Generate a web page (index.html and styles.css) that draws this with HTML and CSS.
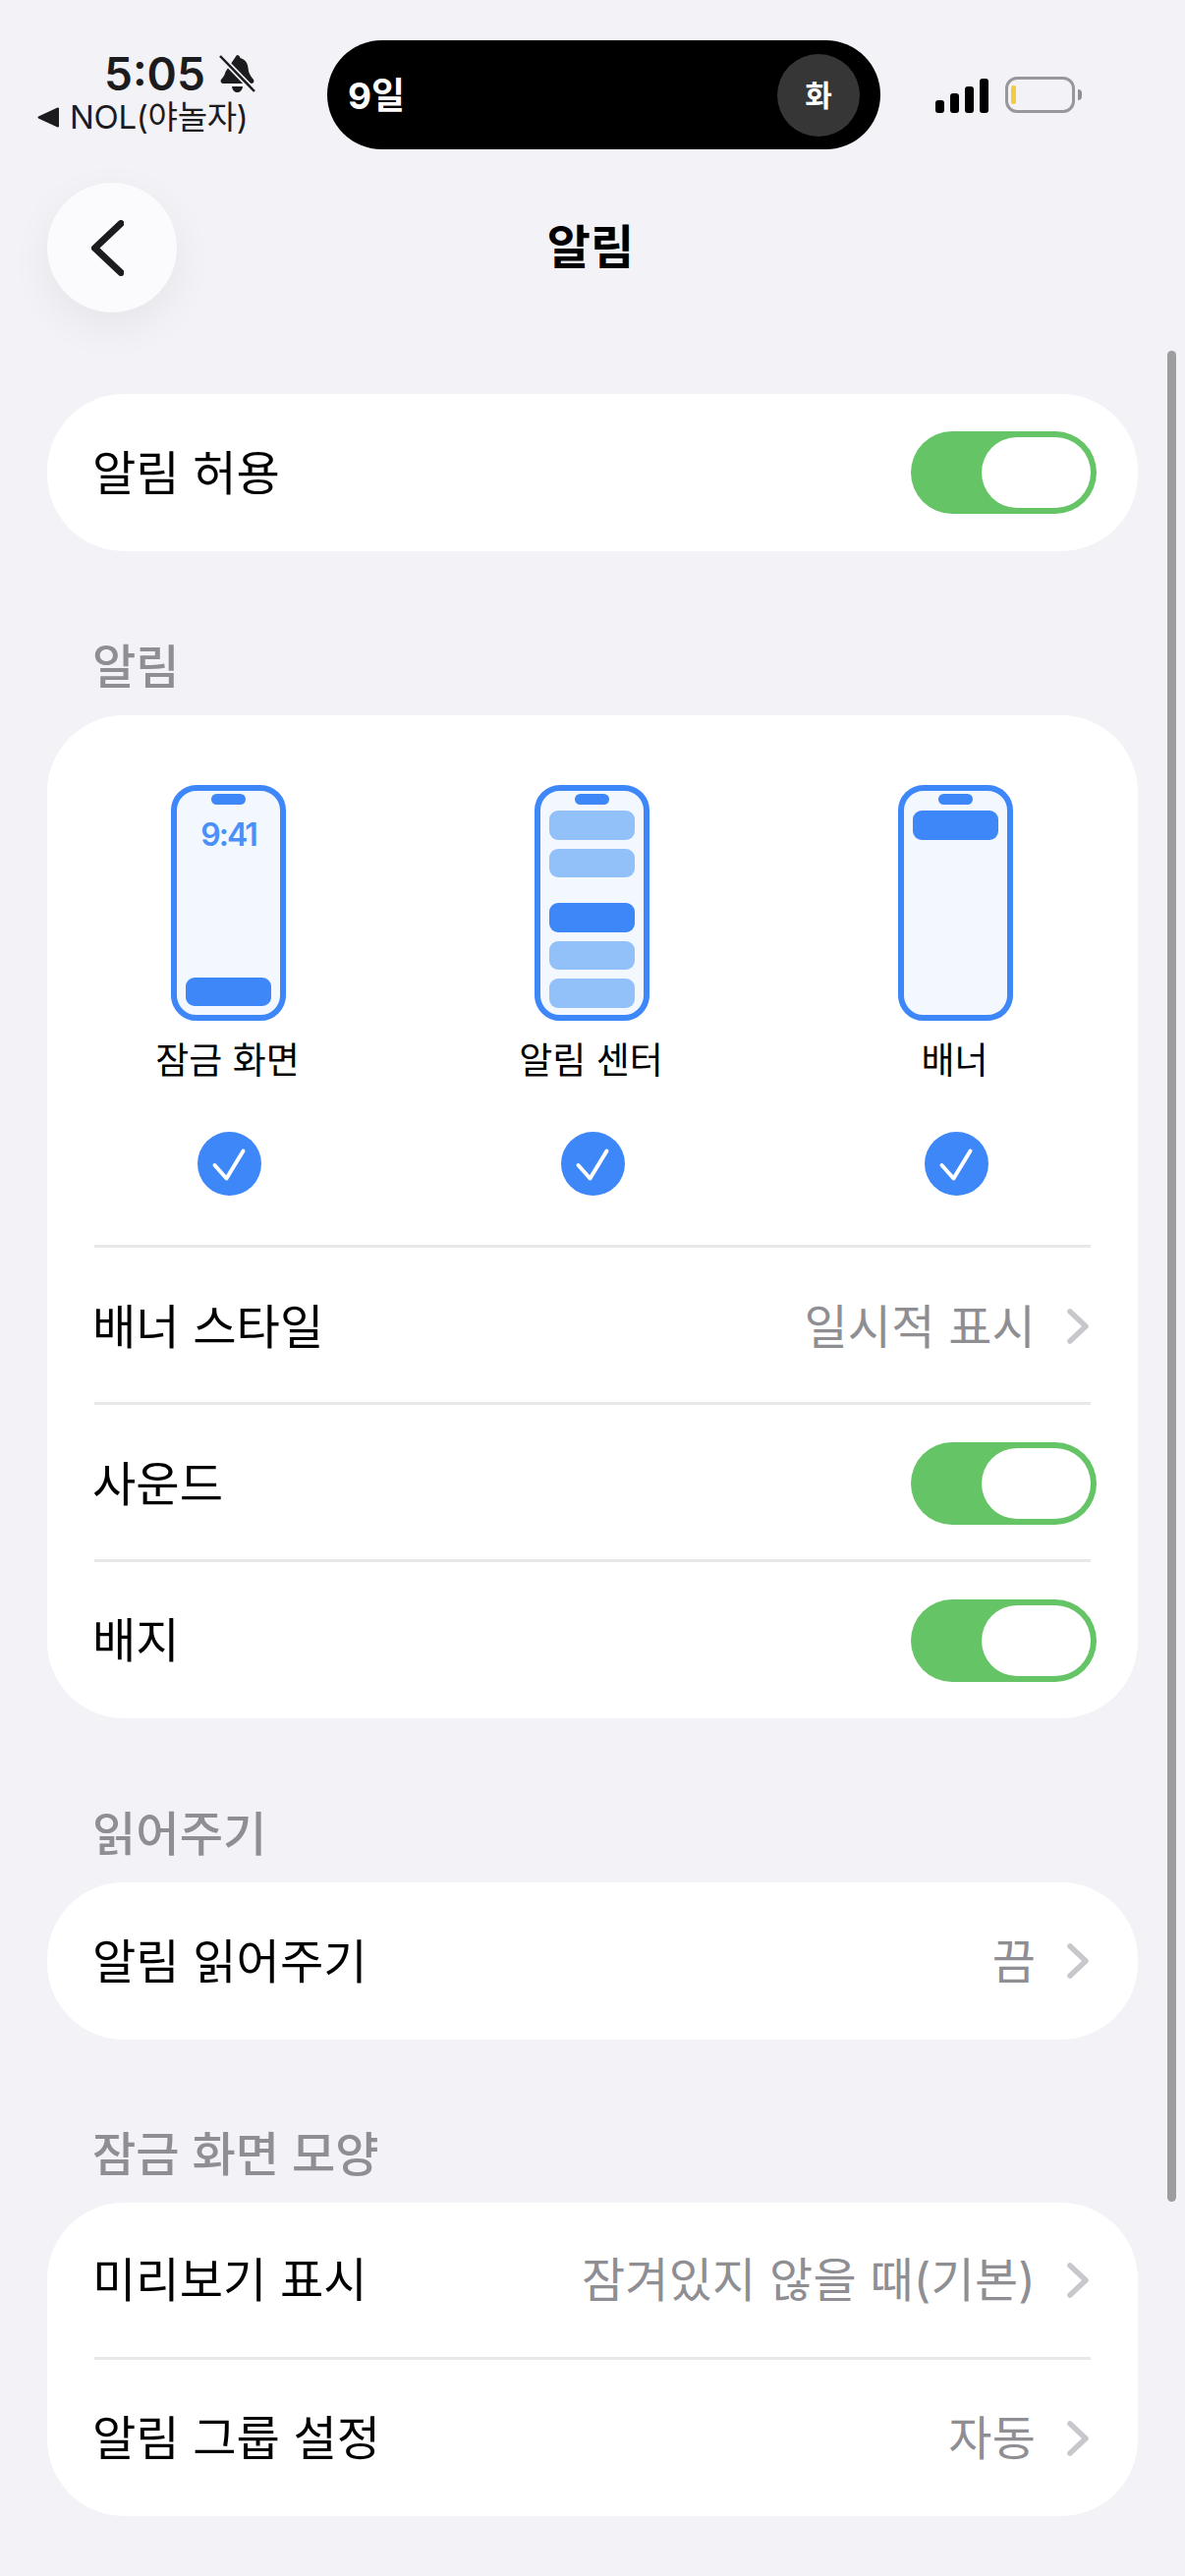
FILE: index.html
```html
<!DOCTYPE html>
<html lang="ko">

<head>
    <meta charset="UTF-8">
    <meta name="viewport" content="width=device-width, initial-scale=1.0">
    <title>알림</title>
    <link rel="stylesheet" href="styles.css">
</head>

<body>
    <div class="status">
        <div class="status-left">
            <div class="time-row">
                <span class="time">5:05</span>
                <svg class="bell" viewBox="0 0 37 40" width="37" height="40">
                    <path d="M18 1c2 0 3 1 3.500 3 5 1.500 7.500 5 8 10 .4 5 2 8 5.500 12 1 2 0 4-2 4H4c-2 0-3-2-2-4 2.500-3 4-5 4.500-8z" fill="#1c1c1e"/>
                    <path d="M13 33h11c-.5 4-3 6-5.500 6S13.500 37 13 33z" fill="#1c1c1e"/>
                    <path d="M2 3l33 34" stroke="#f2f2f7" stroke-width="6"/>
                    <path d="M1 2l35 36" stroke="#1c1c1e" stroke-width="2.500"/>
                </svg>
            </div>
            <div class="app-row">
                <svg viewBox="0 0 22 21" width="22" height="21">
                    <path d="M21 1.500v18L1.500 10.500z" fill="#1c1c1e" stroke="#1c1c1e" stroke-linejoin="round" stroke-width="2"/>
                </svg>
                <span>NOL(야놀자)</span>
            </div>
        </div>
        <div class="island">
            <span class="island-day">9일</span>
            <span class="island-badge">화</span>
        </div>
        <div class="status-right">
            <div class="signal">
                <i class="bar1"></i>
                <i class="bar2"></i>
                <i class="bar3"></i>
                <i class="bar4"></i>
            </div>
            <div class="battery"><i></i></div>
            <div class="battery-cap"></div>
        </div>
    </div>

    <div class="header">
        <div class="back">
            <svg viewBox="0 0 33 57" width="33" height="57">
                <path d="M30 3.500L3.500 28.500 30 53.500" fill="none" stroke="#1c1c1e" stroke-width="7" stroke-linecap="round" stroke-linejoin="round"/>
            </svg>
        </div>
        <div class="title">알림</div>
    </div>

    <div class="main">
        <div class="card">
            <div class="row">
                <span class="row-label">알림 허용</span>
                <div class="toggle"><i></i></div>
            </div>
        </div>

        <div class="section-label">알림</div>
        <div class="card">
            <div class="previews">
                <div class="preview">
                    <div class="phone">
                        <div class="notch"></div>
                        <div class="clock">9:41</div>
                        <div class="note solid lock-note"></div>
                    </div>
                    <div class="preview-label">잠금 화면</div>
                    <svg class="check" viewBox="0 0 65 65" width="65" height="65">
                        <circle cx="32.500" cy="32.500" r="32.500" fill="#3e87f8"/>
                        <path d="M17.500 34l12 13.500 17-28" fill="none" stroke="#fff" stroke-width="4" stroke-linecap="round" stroke-linejoin="round"/>
                    </svg>
                </div>
                <div class="preview">
                    <div class="phone">
                        <div class="notch"></div>
                        <div class="note light"></div>
                        <div class="note light"></div>
                        <div class="note solid group-start"></div>
                        <div class="note light"></div>
                        <div class="note light"></div>
                    </div>
                    <div class="preview-label">알림 센터</div>
                    <svg class="check" viewBox="0 0 65 65" width="65" height="65">
                        <circle cx="32.500" cy="32.500" r="32.500" fill="#3e87f8"/>
                        <path d="M17.500 34l12 13.500 17-28" fill="none" stroke="#fff" stroke-width="4" stroke-linecap="round" stroke-linejoin="round"/>
                    </svg>
                </div>
                <div class="preview">
                    <div class="phone">
                        <div class="notch"></div>
                        <div class="note solid"></div>
                    </div>
                    <div class="preview-label">배너</div>
                    <svg class="check" viewBox="0 0 65 65" width="65" height="65">
                        <circle cx="32.500" cy="32.500" r="32.500" fill="#3e87f8"/>
                        <path d="M17.500 34l12 13.500 17-28" fill="none" stroke="#fff" stroke-width="4" stroke-linecap="round" stroke-linejoin="round"/>
                    </svg>
                </div>
            </div>
            <div class="row line">
                <span class="row-label">배너 스타일</span>
                <span class="row-value">일시적 표시</span>
                <svg class="chevron" viewBox="0 0 22 36" width="22" height="36">
                    <path d="M3 3l16 15L3 33" fill="none" stroke="#c7c7cc" stroke-width="5.500" stroke-linecap="round" stroke-linejoin="round"/>
                </svg>
            </div>
            <div class="row line">
                <span class="row-label">사운드</span>
                <div class="toggle"><i></i></div>
            </div>
            <div class="row line">
                <span class="row-label">배지</span>
                <div class="toggle"><i></i></div>
            </div>
        </div>

        <div class="section-label">읽어주기</div>
        <div class="card">
            <div class="row">
                <span class="row-label">알림 읽어주기</span>
                <span class="row-value">끔</span>
                <svg class="chevron" viewBox="0 0 22 36" width="22" height="36">
                    <path d="M3 3l16 15L3 33" fill="none" stroke="#c7c7cc" stroke-width="5.500" stroke-linecap="round" stroke-linejoin="round"/>
                </svg>
            </div>
        </div>

        <div class="section-label tight">잠금 화면 모양</div>
        <div class="card">
            <div class="row short">
                <span class="row-label">미리보기 표시</span>
                <span class="row-value">잠겨있지 않을 때(기본)</span>
                <svg class="chevron" viewBox="0 0 22 36" width="22" height="36">
                    <path d="M3 3l16 15L3 33" fill="none" stroke="#c7c7cc" stroke-width="5.500" stroke-linecap="round" stroke-linejoin="round"/>
                </svg>
            </div>
            <div class="row line">
                <span class="row-label">알림 그룹 설정</span>
                <span class="row-value">자동</span>
                <svg class="chevron" viewBox="0 0 22 36" width="22" height="36">
                    <path d="M3 3l16 15L3 33" fill="none" stroke="#c7c7cc" stroke-width="5.500" stroke-linecap="round" stroke-linejoin="round"/>
                </svg>
            </div>
        </div>
    </div>

    <div class="scrollbar"></div>
</body>

</html>
```

FILE: styles.css
```css
* {
    box-sizing: border-box;
}

html, body {
    margin: 0;
    height: 2622px;
    overflow: hidden;
}

body {
    position: relative;
    background-color: #f2f2f7;
    font-family: Inter, 'Noto Sans CJK KR', sans-serif;
    color: #000;
}

/* status bar */
.status {
    display: flex;
    align-items: flex-start;
    padding-top: 41px;
}

.status-left {
    width: 333px;
    padding-top: 12px;
    display: flex;
    flex-direction: column;
    align-items: flex-start;
}

.time-row {
    display: flex;
    align-items: center;
    gap: 14px;
    margin-left: 106px;
    height: 44px;
}

.time {
    font-size: 46px;
    font-weight: 600;
    line-height: 44px;
    color: #1c1c1e;
}

.bell {
    display: block;
}

.app-row {
    display: flex;
    align-items: center;
    gap: 11px;
    margin-left: 38px;
    margin-top: 4px;
    height: 36px;
    font-size: 33px;
    letter-spacing: -0.3px;
    line-height: 36px;
    color: #1c1c1e;
}

.island {
    width: 563px;
    height: 111px;
    background: #000;
    border-radius: 56px;
    display: flex;
    align-items: center;
    justify-content: space-between;
    padding: 0 21px 0 21px;
    color: #fff;
}

.island-day {
    font-size: 37px;
    font-weight: 700;
    padding-bottom: 4px;
}

.island-badge {
    width: 84px;
    height: 84px;
    padding-bottom: 3px;
    border-radius: 50%;
    background: #363636;
    display: flex;
    align-items: center;
    justify-content: center;
    font-size: 30px;
    font-weight: 700;
}

.status-right {
    display: flex;
    align-items: center;
    padding-left: 56px;
    height: 111px;
}

.signal {
    display: flex;
    align-items: flex-end;
    gap: 6px;
    height: 35px;
    margin-top: 1px;
}

.signal i {
    display: block;
    width: 9px;
    background: #000;
    border-radius: 3px;
}

.bar1 { height: 13px; }
.bar2 { height: 20px; }
.bar3 { height: 27px; }
.bar4 { height: 35px; }

.battery {
    width: 71px;
    height: 37px;
    margin-left: 17px;
    border: 3px solid #98989c;
    border-radius: 12px;
    padding: 6px 3px;
}

.battery i {
    display: block;
    width: 5px;
    height: 19px;
    background: #f7cb3f;
    border-radius: 2px;
}

.battery-cap {
    width: 4px;
    height: 11px;
    margin-left: 3px;
    background: #8e8e93;
    border-radius: 0 4px 4px 0;
}

/* nav header */
.header {
    display: grid;
    grid-template-columns: 132px 1fr 132px;
    align-items: center;
    margin-top: 34px;
    padding: 0 48px;
}

.back {
    width: 132px;
    height: 132px;
    padding-right: 9px;
    border-radius: 50%;
    background: #fbfbfd;
    box-shadow: 0 14px 44px rgba(0, 0, 0, 0.06);
    display: flex;
    align-items: center;
    justify-content: center;
}

.title {
    padding-right: 4px;
    text-align: center;
    font-size: 48px;
    font-weight: 700;
    line-height: 60px;
}

/* list */
.main {
    padding: 83px 48px 0;
}

.card {
    background: #fff;
    border-radius: 78px;
    overflow: hidden;
}

.section-label {
    margin: 88px 0 19px 46px;
    height: 60px;
    font-size: 48.200px;
    line-height: 60px;
    font-weight: 500;
    color: #8e8e93;
}

.section-label.tight {
    margin-top: 87px;
}

.row {
    display: flex;
    align-items: center;
    height: 160px;
    margin: 0 48px 0 48px;
    font-size: 48.200px;
}

.row.short {
    height: 157px;
}

.row.line {
    border-top: 3px solid #e8e8ea;
    padding-top: 3px;
}

.row.line:last-child {
    height: 162px;
    padding-top: 0;
}

.row-label {
    flex: 1;
    margin-left: -2px;
    padding-bottom: 7px;
    color: #000;
}

.row-value {
    color: #8e8e93;
    font-size: 48px;
    margin-right: 32px;
    padding-bottom: 7px;
    letter-spacing: 0.2px;
}

.chevron {
    display: block;
    flex: none;
    margin-right: 2px;
}

.toggle {
    width: 189px;
    height: 84px;
    margin-right: -6px;
    background: #65c466;
    border-radius: 42px;
    padding: 6px 6px 6px 72px;
}

.toggle i {
    display: block;
    width: 111px;
    height: 72px;
    background: #fff;
    border-radius: 36px;
}

/* preview phones */
.previews {
    display: grid;
    grid-template-columns: repeat(3, 1fr);
    height: 539px;
    padding-top: 71px;
}

.preview {
    display: flex;
    flex-direction: column;
    align-items: center;
}

.phone {
    position: relative;
    width: 117px;
    height: 240px;
    margin-right: 1px;
    background: #f3f8ff;
    border: 6px solid #3e87f8;
    border-radius: 26px;
    padding: 20px 9px 9px;
    display: flex;
    flex-direction: column;
    gap: 9px;
}

.notch {
    position: absolute;
    top: 3px;
    left: 35px;
    width: 35px;
    height: 11px;
    background: #3e87f8;
    border-radius: 6px;
}

.clock {
    text-align: center;
    font-size: 32px;
    line-height: 38px;
    font-weight: 600;
    color: #4a90f8;
    letter-spacing: -2px;
    margin-top: 6px;
}

.note {
    height: 29.500px;
    flex: none;
    border-radius: 9px;
}

.note.light {
    background: #92c1fa;
}

.note.solid {
    background: #3e87f8;
}

.lock-note {
    margin-top: auto;
}

.group-start {
    margin-top: 17px;
}

.preview-label {
    margin: 13px 3px 0 0;
    height: 56px;
    font-size: 37px;
    line-height: 56px;
}

.check {
    display: block;
    margin: 44px 0 0 1px;
}

.scrollbar {
    position: absolute;
    left: 1188px;
    top: 357px;
    width: 9px;
    height: 1884px;
    background: #9d9da0;
    border-radius: 5px;
}
```
